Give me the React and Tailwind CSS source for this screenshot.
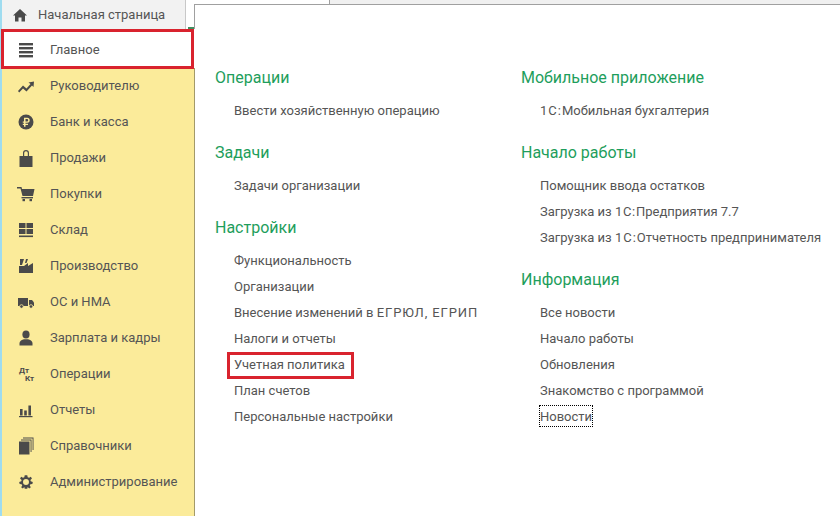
import React from 'react';

const Icon = ({ children }) => (
  <svg width="20" height="20" viewBox="0 0 20 20" fill="#4a4a4a" className="shrink-0">{children}</svg>
);

const icons = {
  main: <><rect x="3" y="3" width="14" height="2.4" /><rect x="3" y="7" width="14" height="2.4" /><rect x="3" y="11" width="14" height="2.4" /><rect x="3" y="15" width="14" height="2.4" /></>,
  chart: <path d="M2 15 L7 9.5 L10.5 12.5 L14.5 8 L12.5 6.5 L18 5.5 L17.5 11 L16 9.5 L10.5 15.5 L7 12.5 L3.2 16.5 Z" />,
  bank: <><circle cx="10" cy="10" r="7.5" /><path d="M8 5.8 H11.2 A2.5 2.5 0 0 1 11.2 10.8 H9.5 V11.8 H12 V13 H9.5 V14.8 H8 V13 H6.8 V11.8 H8 V10.8 H6.8 V9.5 H8 Z M9.5 7.1 V9.5 H11 A1.2 1.2 0 0 0 11 7.1 Z" fill="#fbeb9a" fillRule="evenodd" /></>,
  bag: <path fillRule="evenodd" d="M3.5 8 H7 V5 A3 3 0 0 1 13 5 V8 H16.5 V19 H3.5 Z M8.2 8 H11.8 V5 A1.8 1.8 0 0 0 8.2 5 Z" />,
  cart: <><path d="M1 3 H5.5 L6 5 H18.5 L17 12 H6.5 L4.5 4.5 H1 Z" /><rect x="5.5" y="13" width="11.5" height="1.4" /><rect x="6.5" y="15" width="2.5" height="2.2" /><rect x="13.5" y="15" width="2.5" height="2.2" /></>,
  stock: <><rect x="3" y="3" width="6.5" height="5" /><rect x="10.5" y="3" width="6.5" height="5" /><rect x="3" y="9" width="6.5" height="5" /><rect x="10.5" y="9" width="6.5" height="5" /><rect x="3" y="15.5" width="14" height="1.6" /></>,
  factory: <><path d="M4 3 H8 L6 9 H4 Z" /><path d="M3 10 L8 10 L12 7 V10 L17 7 V17 H3 Z" /><path d="M10 3 H12 L10.5 7 H9 Z" /></>,
  truck: <><path d="M2 6 H12 V14 H2 Z" /><path d="M13 8 H16 L18 10.5 V14 H13 Z" /><circle cx="5.5" cy="14.5" r="1.8" fill="#4a4a4a" stroke="#fbeb9a" strokeWidth="0.8" /><circle cx="15" cy="14.5" r="1.8" fill="#4a4a4a" stroke="#fbeb9a" strokeWidth="0.8" /></>,
  user: <><ellipse cx="10" cy="6.5" rx="3.6" ry="4" /><path d="M3.5 17.5 V15 C3.5 12.8 6 12 8 11.2 H12 C14 12 16.5 12.8 16.5 15 V17.5 Z" /></>,
  reports: <><rect x="4" y="9" width="2.6" height="6.5" /><rect x="8.2" y="10.5" width="2.6" height="5" /><rect x="12.4" y="5.5" width="2.6" height="10" /><rect x="3" y="16" width="13.5" height="1.2" /></>,
  books: <><rect x="3" y="5.5" width="10.5" height="13" /><path d="M5 3.6 H15.5 V16 H14.6 V4.5 H5 Z" /><path d="M7 1.6 H17.5 V14 H16.6 V2.5 H7 Z" /></>,
  gear: <path transform="translate(1.5 1.5) scale(0.85)" fillRule="evenodd" d="M8.5 2 H11.5 L12 4.4 L13.6 5.1 L15.7 3.8 L17 5.9 L15.2 7.5 L15.6 9 L18 10 L17.5 12.4 L15.2 12.6 L14.4 14.2 L15.7 16.2 L13.7 17.6 L12 15.8 L11.5 18 H8.5 L8 15.8 L6.3 17.6 L4.3 16.2 L5.6 14.2 L4.8 12.6 L2.5 12.4 L2 10 L4.4 9 L4.8 7.5 L3 5.9 L4.3 3.8 L6.4 5.1 L8 4.4 Z M10 6.5 A3.5 3.5 0 1 0 10 13.5 A3.5 3.5 0 1 0 10 6.5 Z" />,
};

const menu = [
  ['Руководителю', 'chart'],
  ['Банк и касса', 'bank'],
  ['Продажи', 'bag'],
  ['Покупки', 'cart'],
  ['Склад', 'stock'],
  ['Производство', 'factory'],
  ['ОС и НМА', 'truck'],
  ['Зарплата и кадры', 'user'],
  ['Операции', 'dtkt'],
  ['Отчеты', 'reports'],
  ['Справочники', 'books'],
  ['Администрирование', 'gear'],
];

const MenuRow = ({ label, icon }) => (
  <div className="flex h-9 items-center pl-[14px]">
    {icon === 'dtkt' ? (
      <div className="relative h-5 w-5 shrink-0 text-[8px] font-bold leading-none text-[#4a4a4a]">
        <span className="absolute left-[3px] top-[3px]">Дт</span>
        <span className="absolute left-[9px] top-[11px]">Кт</span>
      </div>
    ) : (
      <Icon>{icons[icon]}</Icon>
    )}
    <span className="ml-[14px]">{label}</span>
  </div>
);

const Section = ({ title, children }) => (
  <div>
    <div className="text-[16px] leading-[20px] text-[#1e9e5c]">{title}</div>
    <div className="mt-[10px] flex flex-col pl-[19px]">{children}</div>
  </div>
);

const Link = ({ children }) => <div className="h-[26px] leading-[26px] whitespace-nowrap">{children}</div>;

export default function App() {
  return (
    <div className="flex h-[516px] w-[840px] overflow-hidden bg-white font-['Roboto','Liberation_Sans',sans-serif] text-[13px] text-[#555555]">
      {/* левая панель разделов */}
      <div className="flex w-[195px] shrink-0 flex-col border-l-2 border-[#9fdcf0]">
        <div className="flex h-[29px] shrink-0">
          <div className="flex w-[184px] shrink-0 items-center border-r border-[#c8c8c8] bg-[#f2f2f2] pl-[10px]">
            <svg width="16" height="16" viewBox="0 0 16 16" fill="#4a4a4a"><path d="M8 2 L15 8.5 H13 V14.5 H9.5 V10.5 H6.5 V14.5 H3 V8.5 H1 Z" /></svg>
            <span className="ml-[10px]">Начальная страница</span>
          </div>
          <div className="relative mt-[4px] flex-1 border-r border-[#a0a0a0]">
            <div className="absolute bottom-0 right-0 h-[2px] w-[6px] bg-[#3f8f5f]" />
          </div>
        </div>
        <div className="relative z-10 -ml-px flex h-[40px] w-[193px] shrink-0 items-center border-[3px] border-[#d9232e] bg-white pl-[12px] pt-[2px]">
          <Icon>{icons.main}</Icon>
          <span className="ml-[14px]">Главное</span>
        </div>
        <div className="-mt-px flex-1 border-r border-[#a39a6a] bg-[#fbeb9a]">
          {menu.map(([label, icon]) => <MenuRow key={label} label={label} icon={icon} />)}
        </div>
      </div>

      {/* открытая панель функций */}
      <div className="flex min-w-0 flex-1 flex-col">
        <div className="flex h-[5px] shrink-0 border-b border-[#a0a0a0]">
          <div className="w-[135px] border-r border-[#a0a0a0]" />
          <div className="flex-1 bg-[#f0f0f0]" />
        </div>
        <div className="flex flex-1 pl-[20px] pt-[63px]">
          <div className="flex w-[306px] shrink-0 flex-col gap-[19px]">
            <Section title="Операции"><Link>Ввести хозяйственную операцию</Link></Section>
            <Section title="Задачи"><Link>Задачи организации</Link></Section>
            <Section title="Настройки">
              <Link>Функциональность</Link>
              <Link>Организации</Link>
              <Link>Внесение изменений в <span className="tracking-[0.9px]">ЕГРЮЛ, ЕГРИП</span></Link>
              <Link>Налоги и отчеты</Link>
              <div className="relative">
                <Link>Учетная политика</Link>
                <div className="absolute -left-[7px] top-0 h-[27px] w-[127px] border-[3px] border-[#d9232e]" />
              </div>
              <Link>План счетов</Link>
              <Link>Персональные настройки</Link>
            </Section>
          </div>
          <div className="flex flex-col gap-[19px]">
            <Section title="Мобильное приложение"><Link><span className="tracking-[1px]">1С:</span>Мобильная бухгалтерия</Link></Section>
            <Section title="Начало работы">
              <Link>Помощник ввода остатков</Link>
              <Link>Загрузка из <span className="tracking-[0.7px]">1С:</span>Предприятия 7.7</Link>
              <Link>Загрузка из <span className="tracking-[1px]">1С:</span>Отчетность предпринимателя</Link>
            </Section>
            <Section title="Информация">
              <Link>Все новости</Link>
              <Link>Начало работы</Link>
              <Link>Обновления</Link>
              <Link>Знакомство с программой</Link>
              <div className="relative">
                <Link>Новости</Link>
                <div className="absolute -left-[1px] top-[1px] h-[22px] w-[54px] border border-dotted border-black" />
              </div>
            </Section>
          </div>
        </div>
      </div>
    </div>
  );
}
